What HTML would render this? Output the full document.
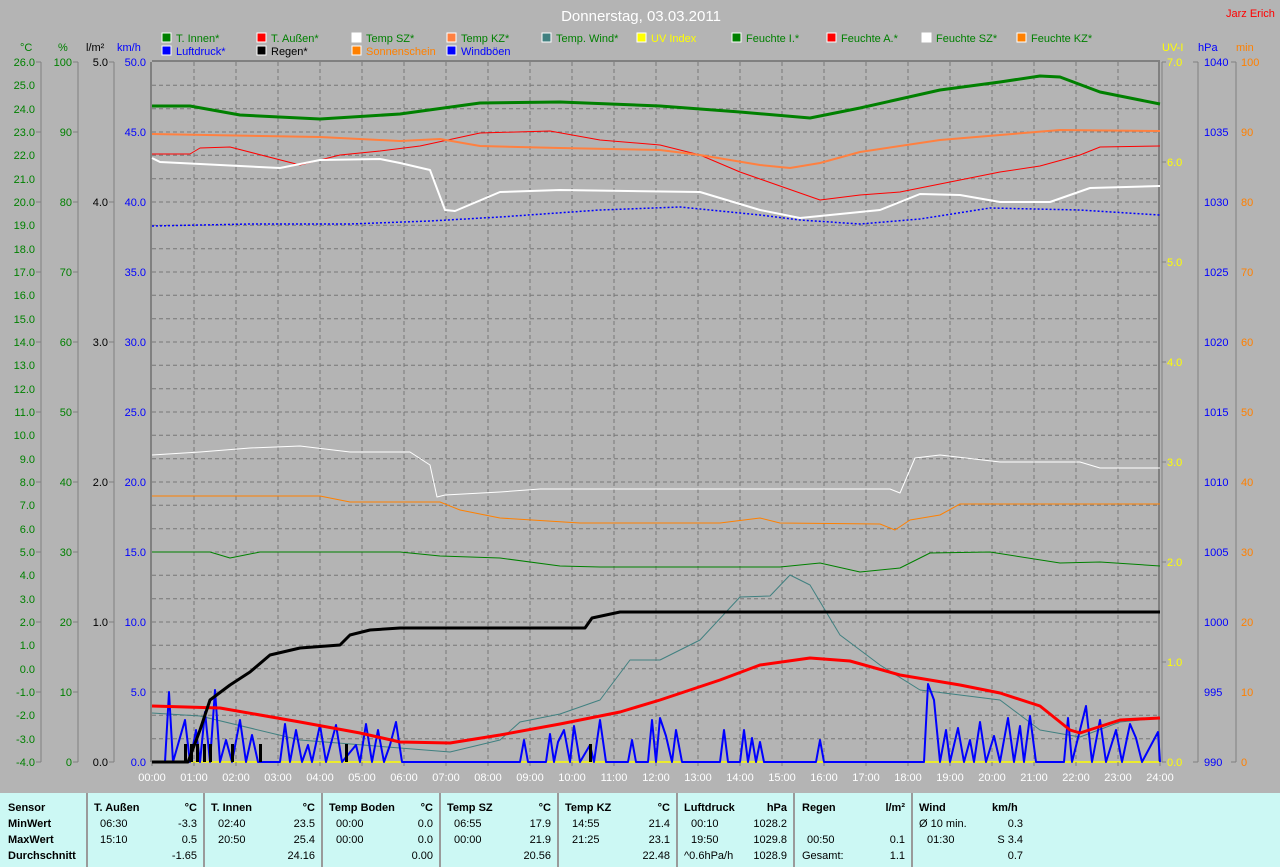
<!DOCTYPE html>
<html><head><meta charset="utf-8"><style>
body{margin:0;width:1280px;height:867px;background:#b4b4b4;font-family:"Liberation Sans",sans-serif;overflow:hidden;position:relative}
svg{position:absolute;left:0;top:0}
.tb{position:absolute;left:0;top:793px;width:1280px;height:74px;background:#ccf8f4;font-size:11px;color:#000}
.c{position:absolute;top:0;height:74px;border-right:2px solid #9a9a9a}
.r{position:absolute;white-space:nowrap}
b{font-weight:bold}
</style></head><body>
<svg width="1280" height="867" font-family="Liberation Sans, sans-serif" font-size="11">
<text x="641" y="21" fill="#fff" font-size="15" text-anchor="middle">Donnerstag, 03.03.2011</text>
<text x="1226" y="17" fill="#f00" font-size="11">Jarz Erich</text>
<g font-size="11">
<rect x="162" y="33" width="9" height="9" fill="#008000" stroke="#fff"/><text x="176" y="42" fill="#008000">T. Innen*</text>
<rect x="162" y="46" width="9" height="9" fill="#00f" stroke="#fff"/><text x="176" y="55" fill="#00f">Luftdruck*</text>
<rect x="257" y="33" width="9" height="9" fill="#f00" stroke="#fff"/><text x="271" y="42" fill="#008000">T. Außen*</text>
<rect x="257" y="46" width="9" height="9" fill="#000" stroke="#fff"/><text x="271" y="55" fill="#000">Regen*</text>
<rect x="352" y="33" width="9" height="9" fill="#fff" stroke="#fff"/><text x="366" y="42" fill="#008000">Temp SZ*</text>
<rect x="352" y="46" width="9" height="9" fill="#ff8000" stroke="#fff"/><text x="366" y="55" fill="#ff8000">Sonnenschein</text>
<rect x="447" y="33" width="9" height="9" fill="#ff8040" stroke="#fff"/><text x="461" y="42" fill="#008000">Temp KZ*</text>
<rect x="447" y="46" width="9" height="9" fill="#00f" stroke="#fff"/><text x="461" y="55" fill="#00f">Windböen</text>
<rect x="542" y="33" width="9" height="9" fill="#408080" stroke="#fff"/><text x="556" y="42" fill="#008000">Temp. Wind*</text>
<rect x="637" y="33" width="9" height="9" fill="#ff0" stroke="#fff"/><text x="651" y="42" fill="#ff0">UV Index</text>
<rect x="732" y="33" width="9" height="9" fill="#008000" stroke="#fff"/><text x="746" y="42" fill="#008000">Feuchte I.*</text>
<rect x="827" y="33" width="9" height="9" fill="#f00" stroke="#fff"/><text x="841" y="42" fill="#008000">Feuchte A.*</text>
<rect x="922" y="33" width="9" height="9" fill="#fff" stroke="#fff"/><text x="936" y="42" fill="#008000">Feuchte SZ*</text>
<rect x="1017" y="33" width="9" height="9" fill="#ff8000" stroke="#fff"/><text x="1031" y="42" fill="#008000">Feuchte KZ*</text>
</g>
<!-- axis headers -->
<text x="20" y="51" fill="#008000">°C</text><text x="58" y="51" fill="#008000">%</text><text x="86" y="51" fill="#000">l/m²</text><text x="117" y="51" fill="#00f">km/h</text>
<text x="1162" y="51" fill="#ff0">UV-I</text><text x="1198" y="51" fill="#00f">hPa</text><text x="1236" y="51" fill="#ff8000">min</text>
<!-- grid -->
<g stroke="#777" stroke-dasharray="4,3" stroke-width="1">
<path d="M194 62V762M236 62V762M278 62V762M320 62V762M362 62V762M404 62V762M446 62V762M488 62V762M530 62V762M572 62V762M614 62V762M656 62V762M698 62V762M740 62V762M782 62V762M824 62V762M866 62V762M908 62V762M950 62V762M992 62V762M1034 62V762M1076 62V762M1118 62V762"/>
<path d="M152 85.3H1160M152 108.7H1160M152 132H1160M152 155.3H1160M152 178.7H1160M152 202H1160M152 225.3H1160M152 248.7H1160M152 272H1160M152 295.3H1160M152 318.7H1160M152 342H1160M152 365.3H1160M152 388.7H1160M152 412H1160M152 435.3H1160M152 458.7H1160M152 482H1160M152 505.3H1160M152 528.7H1160M152 552H1160M152 575.3H1160M152 598.7H1160M152 622H1160M152 645.3H1160M152 668.7H1160M152 692H1160M152 715.3H1160M152 738.7H1160"/>
</g>
<g stroke="#808080" stroke-width="2" fill="none">
<path d="M152 61H1160M151 62V762M1159 62V762"/>
</g>
<g stroke="#808080" stroke-width="1" fill="none">
<path d="M1162 62V762M41 62V762M78 62V762M114 62V762M1198 62V762M1236 62V762"/>
</g>
<path d="M152 762H1160" stroke="#ff0" stroke-width="1.5"/>
<!-- left labels -->
<g fill="#008000" text-anchor="end">
<text x="35" y="66">26.0</text><text x="35" y="89">25.0</text><text x="35" y="113">24.0</text><text x="35" y="136">23.0</text><text x="35" y="159">22.0</text><text x="35" y="183">21.0</text><text x="35" y="206">20.0</text><text x="35" y="229">19.0</text><text x="35" y="253">18.0</text><text x="35" y="276">17.0</text><text x="35" y="299">16.0</text><text x="35" y="323">15.0</text><text x="35" y="346">14.0</text><text x="35" y="369">13.0</text><text x="35" y="393">12.0</text><text x="35" y="416">11.0</text><text x="35" y="439">10.0</text><text x="35" y="463">9.0</text><text x="35" y="486">8.0</text><text x="35" y="509">7.0</text><text x="35" y="556">5.0</text><text x="35" y="533">6.0</text><text x="35" y="579">4.0</text><text x="35" y="603">3.0</text><text x="35" y="626">2.0</text><text x="35" y="649">1.0</text><text x="35" y="673">0.0</text><text x="35" y="696">-1.0</text><text x="35" y="719">-2.0</text><text x="35" y="743">-3.0</text><text x="35" y="766">-4.0</text>
<text x="72" y="66">100</text><text x="72" y="136">90</text><text x="72" y="206">80</text><text x="72" y="276">70</text><text x="72" y="346">60</text><text x="72" y="416">50</text><text x="72" y="486">40</text><text x="72" y="556">30</text><text x="72" y="626">20</text><text x="72" y="696">10</text><text x="72" y="766">0</text>
</g>
<g fill="#000" text-anchor="end"><text x="108" y="66">5.0</text><text x="108" y="206">4.0</text><text x="108" y="346">3.0</text><text x="108" y="486">2.0</text><text x="108" y="626">1.0</text><text x="108" y="766">0.0</text></g>
<g fill="#00f" text-anchor="end"><text x="146" y="66">50.0</text><text x="146" y="136">45.0</text><text x="146" y="206">40.0</text><text x="146" y="276">35.0</text><text x="146" y="346">30.0</text><text x="146" y="416">25.0</text><text x="146" y="486">20.0</text><text x="146" y="556">15.0</text><text x="146" y="626">10.0</text><text x="146" y="696">5.0</text><text x="146" y="766">0.0</text></g>
<g stroke="#808080"><path d="M36 62h5M36 132h5M36 202h5M36 272h5M36 342h5M36 412h5M36 482h5M36 552h5M36 622h5M36 692h5M36 762h5M73 62h5M73 132h5M73 202h5M73 272h5M73 342h5M73 412h5M73 482h5M73 552h5M73 622h5M73 692h5M73 762h5M109 62h5M109 202h5M109 342h5M109 482h5M109 622h5M109 762h5M1162 62h4M1162 162h4M1162 262h4M1162 362h4M1162 462h4M1162 562h4M1162 662h4M1162 762h4M1193 62h5M1231 62h5M1193 762h5M1231 762h5"/></g>
<!-- right labels -->
<g fill="#ff0"><text x="1167" y="66">7.0</text><text x="1167" y="166">6.0</text><text x="1167" y="266">5.0</text><text x="1167" y="366">4.0</text><text x="1167" y="466">3.0</text><text x="1167" y="566">2.0</text><text x="1167" y="666">1.0</text><text x="1167" y="766">0.0</text></g>
<g fill="#00f"><text x="1204" y="66">1040</text><text x="1204" y="136">1035</text><text x="1204" y="206">1030</text><text x="1204" y="276">1025</text><text x="1204" y="346">1020</text><text x="1204" y="416">1015</text><text x="1204" y="486">1010</text><text x="1204" y="556">1005</text><text x="1204" y="626">1000</text><text x="1204" y="696">995</text><text x="1204" y="766">990</text></g>
<g fill="#ff8000"><text x="1241" y="66">100</text><text x="1241" y="136">90</text><text x="1241" y="206">80</text><text x="1241" y="276">70</text><text x="1241" y="346">60</text><text x="1241" y="416">50</text><text x="1241" y="486">40</text><text x="1241" y="556">30</text><text x="1241" y="626">20</text><text x="1241" y="696">10</text><text x="1241" y="766">0</text></g>
<!-- x labels -->
<g fill="#fff" text-anchor="middle"><text x="152" y="781">00:00</text><text x="194" y="781">01:00</text><text x="236" y="781">02:00</text><text x="278" y="781">03:00</text><text x="320" y="781">04:00</text><text x="362" y="781">05:00</text><text x="404" y="781">06:00</text><text x="446" y="781">07:00</text><text x="488" y="781">08:00</text><text x="530" y="781">09:00</text><text x="572" y="781">10:00</text><text x="614" y="781">11:00</text><text x="656" y="781">12:00</text><text x="698" y="781">13:00</text><text x="740" y="781">14:00</text><text x="782" y="781">15:00</text><text x="824" y="781">16:00</text><text x="866" y="781">17:00</text><text x="908" y="781">18:00</text><text x="950" y="781">19:00</text><text x="992" y="781">20:00</text><text x="1034" y="781">21:00</text><text x="1076" y="781">22:00</text><text x="1118" y="781">23:00</text><text x="1160" y="781">24:00</text></g>
<g stroke="#808080"><path d="M152 762v4M194 762v4M236 762v4M278 762v4M320 762v4M362 762v4M404 762v4M446 762v4M488 762v4M530 762v4M572 762v4M614 762v4M656 762v4M698 762v4M740 762v4M782 762v4M824 762v4M866 762v4M908 762v4M950 762v4M992 762v4M1034 762v4M1076 762v4M1118 762v4M1160 762v4"/></g>
<!-- curves -->
<g fill="none" stroke-linejoin="round">
<polyline stroke="#008000" stroke-width="3" points="152,106 190,106 240,115 320,119 400,114 480,103 560,102 660,106 740,112 810,118 860,108 940,90 1000,82 1040,76 1060,77 1100,92 1160,104"/>
<polyline stroke="#f00" stroke-width="1" points="152,154 190,154 200,148 230,147 300,165 340,155 380,151 420,146 480,133 550,131 600,140 660,145 700,155 740,172 780,186 820,200 860,195 900,192 960,180 1000,172 1040,166 1080,155 1100,147 1160,146"/>
<polyline stroke="#ff8040" stroke-width="2" points="152,134 320,137 400,141 440,139 480,146 560,148 660,150 700,155 760,165 790,168 820,163 860,152 940,140 1000,135 1060,130 1160,131"/>
<polyline stroke="#fff" stroke-width="2" points="152,158 160,162 280,168 320,160 380,159 400,163 430,170 445,210 455,211 500,192 560,190 700,192 760,210 800,218 840,214 880,210 920,194 960,195 1000,202 1050,202 1090,188 1160,186"/>
<polyline stroke="#00f" stroke-width="1.5" stroke-dasharray="2,2" points="152,226 250,224 350,224 430,221 500,217 600,210 680,207 760,215 800,220 860,224 920,219 990,208 1080,210 1160,215"/>
<polyline stroke="#fff" stroke-width="1" points="152,455 200,452 250,448 300,446 350,452 410,452 430,465 437,497 445,495 500,492 540,489 890,489 900,493 915,458 940,455 1000,462 1080,462 1100,468 1160,468"/>
<polyline stroke="#ff8000" stroke-width="1" points="152,496 320,496 350,502 440,502 460,510 500,518 580,523 720,523 760,518 780,523 880,524 895,530 910,520 940,515 960,504 1160,504"/>
<polyline stroke="#008000" stroke-width="1" points="152,552 210,552 230,558 260,552 400,552 440,556 500,558 560,566 600,567 780,567 820,563 860,572 900,568 930,553 990,552 1060,563 1100,562 1160,566"/>
<polyline stroke="#408080" stroke-width="1" points="152,713 200,716 300,740 400,748 450,752 500,740 520,722 560,714 600,700 630,660 660,660 700,640 740,597 770,596 790,575 810,585 840,635 880,665 920,690 1000,700 1040,730 1080,737 1120,722 1160,718"/>
<polyline stroke="#00f" stroke-width="2" points="165,762 169,692 173,762 185,720 190,762 196,730 200,762 205,712 210,762 215,690 220,762 226,740 232,762 240,720 246,762 252,735 258,762 280,762 285,724 290,762 296,730 302,762 308,745 312,762 320,725 326,762 336,725 342,762 356,745 360,762 366,724 372,762 378,730 384,762 390,745 396,722 402,762 520,762 524,740 528,762 546,762 550,734 554,762 558,742 564,730 570,762 574,726 580,762 590,745 594,762 600,720 606,762 628,762 632,740 636,762 648,762 652,720 656,762 660,718 666,736 672,762 676,730 682,762 720,762 724,730 728,762 740,762 744,730 748,762 752,738 756,762 760,742 764,762 816,762 820,740 824,762 924,762 928,684 934,700 940,762 946,730 950,762 958,728 964,762 970,740 974,762 980,722 986,762 994,736 1000,762 1008,718 1014,762 1020,726 1024,762 1030,716 1036,762 1064,762 1068,718 1072,762 1080,730 1086,706 1092,762 1100,720 1106,762 1116,730 1122,762 1130,724 1136,738 1142,762 1158,732 1160,762"/>
<polyline stroke="#f00" stroke-width="3" points="152,706 220,708 300,722 360,733 400,742 450,743 500,735 560,724 620,712 660,700 720,680 760,665 810,658 850,661 900,675 960,685 1000,693 1040,706 1070,730 1080,733 1120,720 1160,718"/>
<polyline stroke="#000" stroke-width="3" points="152,762 188,762 200,730 210,700 230,685 250,672 270,655 300,648 340,645 350,635 370,630 400,628 585,628 592,618 620,612 1160,612"/>
</g>
<g fill="#000"><rect x="184" y="744" width="3" height="18"/><rect x="190" y="744" width="3" height="18"/><rect x="196" y="744" width="3" height="18"/><rect x="203" y="744" width="3" height="18"/><rect x="209" y="744" width="3" height="18"/><rect x="231" y="744" width="3" height="18"/><rect x="259" y="744" width="3" height="18"/><rect x="345" y="744" width="3" height="18"/><rect x="589" y="744" width="3" height="18"/></g>
</svg>
<div class="tb">
<div class="c" style="left:0;width:86px"><div class="r" style="left:8px;top:9px"><b>Sensor</b></div><div class="r" style="left:8px;top:25px"><b>MinWert</b></div><div class="r" style="left:8px;top:41px"><b>MaxWert</b></div><div class="r" style="left:8px;top:57px"><b>Durchschnitt</b></div></div>
<div class="c" style="left:88px;width:115px"><div class="r" style="left:6px;top:9px"><b>T. Außen</b></div><div class="r" style="right:6px;top:9px"><b>°C</b></div><div class="r" style="left:12px;top:25px">06:30</div><div class="r" style="right:6px;top:25px">-3.3</div><div class="r" style="left:12px;top:41px">15:10</div><div class="r" style="right:6px;top:41px">0.5</div><div class="r" style="right:6px;top:57px">-1.65</div></div>
<div class="c" style="left:205px;width:116px"><div class="r" style="left:6px;top:9px"><b>T. Innen</b></div><div class="r" style="right:6px;top:9px"><b>°C</b></div><div class="r" style="left:13px;top:25px">02:40</div><div class="r" style="right:6px;top:25px">23.5</div><div class="r" style="left:13px;top:41px">20:50</div><div class="r" style="right:6px;top:41px">25.4</div><div class="r" style="right:6px;top:57px">24.16</div></div>
<div class="c" style="left:323px;width:116px"><div class="r" style="left:6px;top:9px"><b>Temp Boden</b></div><div class="r" style="right:6px;top:9px"><b>°C</b></div><div class="r" style="left:13px;top:25px">00:00</div><div class="r" style="right:6px;top:25px">0.0</div><div class="r" style="left:13px;top:41px">00:00</div><div class="r" style="right:6px;top:41px">0.0</div><div class="r" style="right:6px;top:57px">0.00</div></div>
<div class="c" style="left:441px;width:116px"><div class="r" style="left:6px;top:9px"><b>Temp SZ</b></div><div class="r" style="right:6px;top:9px"><b>°C</b></div><div class="r" style="left:13px;top:25px">06:55</div><div class="r" style="right:6px;top:25px">17.9</div><div class="r" style="left:13px;top:41px">00:00</div><div class="r" style="right:6px;top:41px">21.9</div><div class="r" style="right:6px;top:57px">20.56</div></div>
<div class="c" style="left:559px;width:117px"><div class="r" style="left:6px;top:9px"><b>Temp KZ</b></div><div class="r" style="right:6px;top:9px"><b>°C</b></div><div class="r" style="left:13px;top:25px">14:55</div><div class="r" style="right:6px;top:25px">21.4</div><div class="r" style="left:13px;top:41px">21:25</div><div class="r" style="right:6px;top:41px">23.1</div><div class="r" style="right:6px;top:57px">22.48</div></div>
<div class="c" style="left:678px;width:115px"><div class="r" style="left:6px;top:9px"><b>Luftdruck</b></div><div class="r" style="right:6px;top:9px"><b>hPa</b></div><div class="r" style="left:13px;top:25px">00:10</div><div class="r" style="right:6px;top:25px">1028.2</div><div class="r" style="left:13px;top:41px">19:50</div><div class="r" style="right:6px;top:41px">1029.8</div><div class="r" style="left:6px;top:57px">^0.6hPa/h</div><div class="r" style="right:6px;top:57px">1028.9</div></div>
<div class="c" style="left:795px;width:116px"><div class="r" style="left:7px;top:9px"><b>Regen</b></div><div class="r" style="right:6px;top:9px"><b>l/m²</b></div><div class="r" style="left:12px;top:41px">00:50</div><div class="r" style="right:6px;top:41px">0.1</div><div class="r" style="left:7px;top:57px">Gesamt:</div><div class="r" style="right:6px;top:57px">1.1</div></div>
<div style="position:absolute;left:913px;top:0;width:120px;height:74px"><div class="r" style="left:6px;top:9px"><b>Wind</b></div><div class="r" style="left:79px;top:9px"><b>km/h</b></div><div class="r" style="left:6px;top:25px">Ø 10 min.</div><div class="r" style="right:10px;top:25px">0.3</div><div class="r" style="left:14px;top:41px">01:30</div><div class="r" style="right:10px;top:41px">S 3.4</div><div class="r" style="right:10px;top:57px">0.7</div></div>
</div>
</body></html>
